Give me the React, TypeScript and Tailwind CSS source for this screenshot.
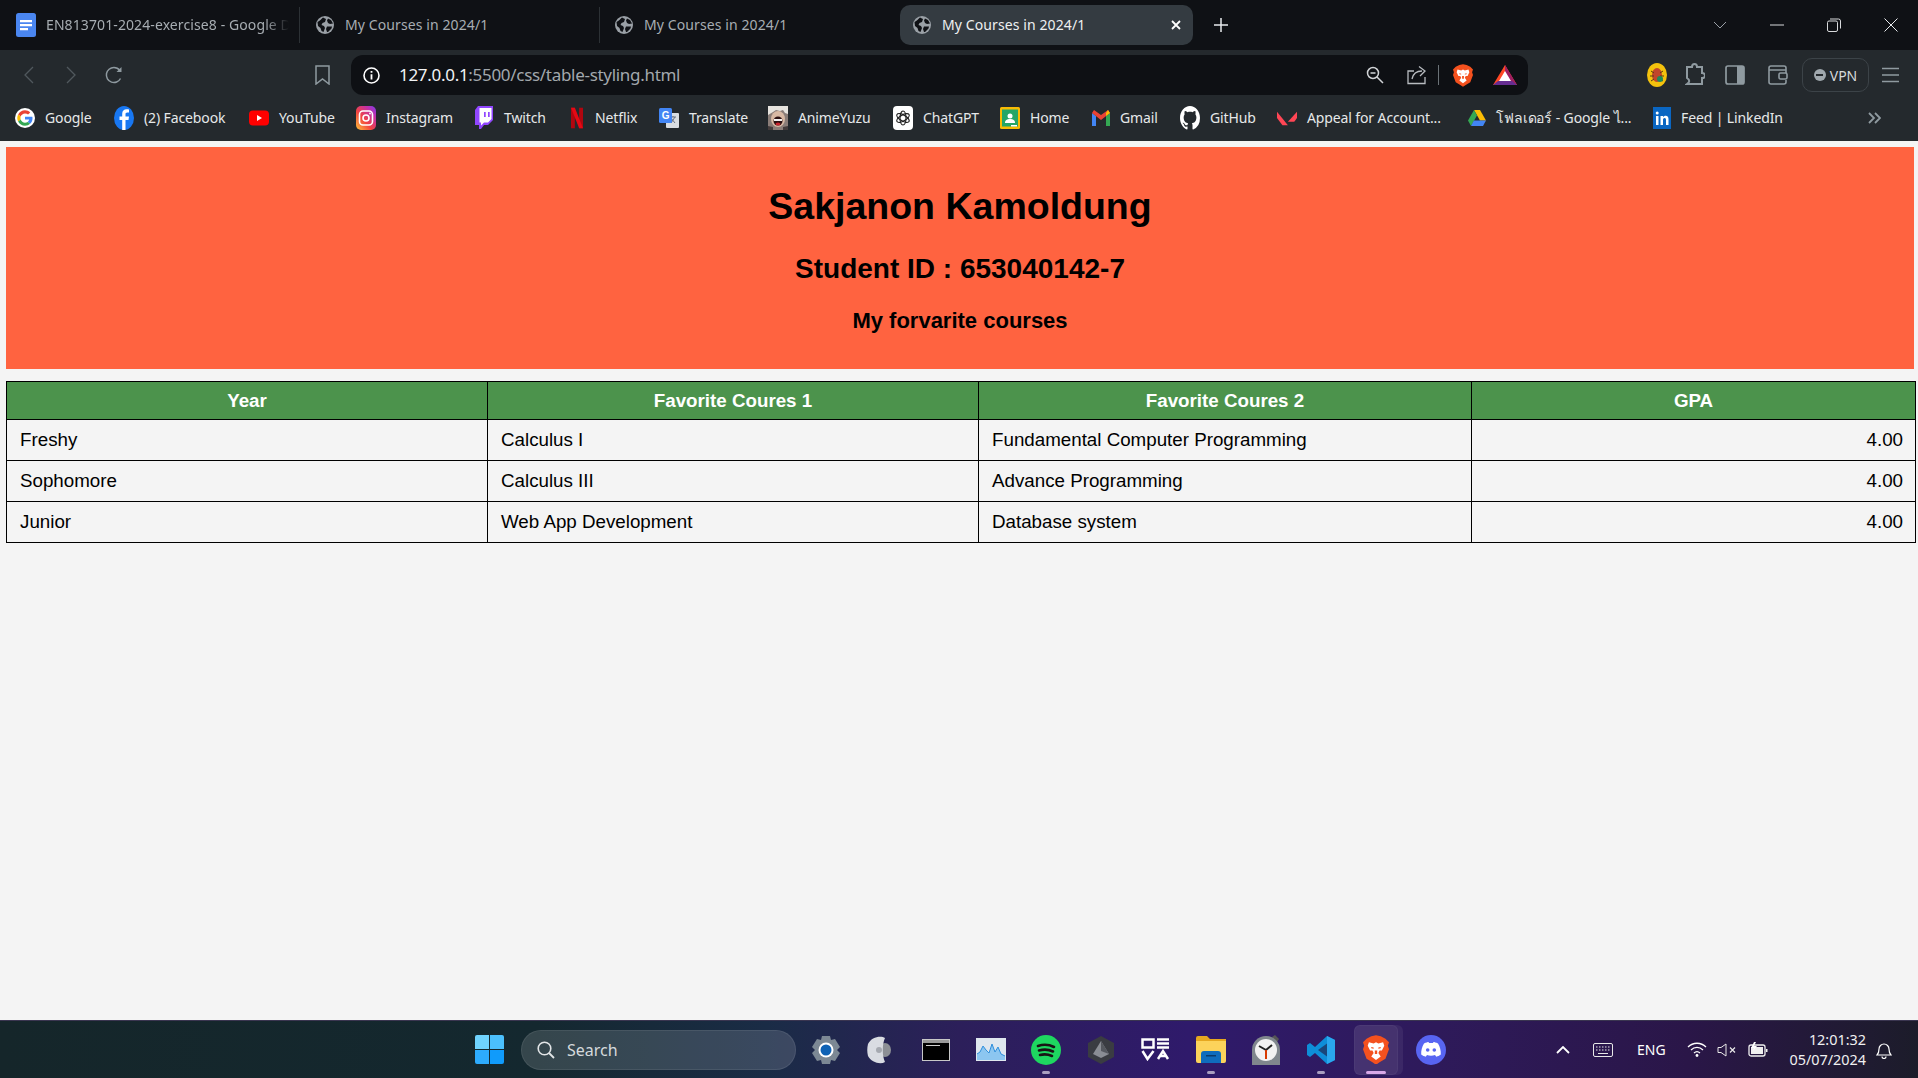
import React from "react";

const Globe = ({ c = "#9aa0a6" }: { c?: string }) => (
  <svg width="18" height="18" viewBox="0 0 18 18" className="shrink-0">
    <circle cx="9" cy="9" r="9" fill={c} />
    <path d="M1.500 6C4 5 5 3 7 1.500L10 3 9 6 6.500 7 5.500 9 8 10l1 2-1.500 4-2-1-1-3-2.500-2zM12 2.500l3 1.500 2 3.500-3 .5-2-1-1-2.500zM11 10.500l5 0-.5 2-3.500 3.500-1 0-1-3z" fill="#0f1115" />
  </svg>
);

const GoogleG = () => (
  <svg width="20" height="20" viewBox="0 0 48 48">
    <circle cx="24" cy="24" r="24" fill="#fff" />
    <path fill="#ea4335" d="M24 13c3 0 5.400 1 7.300 2.800l5.300-5.300C33.300 7.400 29 5.500 24 5.500c-7.200 0-13.500 4.100-16.500 10.200l6.200 4.800C15.100 16.100 19.200 13 24 13z" />
    <path fill="#4285f4" d="M42 24.500c0-1.300-.1-2.500-.3-3.700H24v7h10.100c-.4 2.300-1.800 4.300-3.800 5.600l6 4.600C39.800 34.800 42 30.100 42 24.500z" />
    <path fill="#fbbc05" d="M13.700 27.500c-.9-2.300-.9-4.800 0-7l-6.200-4.800c-2.700 5.200-2.700 11.400 0 16.600z" />
    <path fill="#34a853" d="M24 42.500c5 0 9.200-1.600 12.300-4.500l-6-4.600c-1.700 1.100-3.800 1.800-6.300 1.800-4.800 0-8.900-3.100-10.300-7.700l-6.200 4.800c3 6.100 9.300 10.200 16.500 10.200z" />
  </svg>
);
const Facebook = () => (
  <svg width="20" height="24" viewBox="0 0 20 24">
    <ellipse cx="10" cy="12" rx="10" ry="12" fill="#1877f2" />
    <path d="M11.500 24V14h3l.5-3.500h-3.500V8.300c0-1 .4-1.800 1.900-1.800H15V3.500c-.5-.1-1.400-.2-2.400-.2-2.700 0-4.400 1.600-4.400 4.500v2.700H5.500V14h2.700v10z" fill="#fff" />
  </svg>
);
const YouTube = () => (
  <svg width="20" height="16" viewBox="0 0 20 16">
    <rect width="20" height="15" y="0.500" rx="4" fill="#f00" />
    <path d="M8 5l5 3-5 3z" fill="#fff" />
  </svg>
);
const Instagram = () => (
  <svg width="20" height="24" viewBox="0 0 20 24">
    <defs>
      <linearGradient id="ig" x1="0" y1="1" x2="1" y2="0">
        <stop offset="0" stopColor="#fdc43a" />
        <stop offset="0.4" stopColor="#f3453f" />
        <stop offset="0.75" stopColor="#c32fa8" />
        <stop offset="1" stopColor="#7a3ff0" />
      </linearGradient>
    </defs>
    <rect width="20" height="24" rx="5" fill="url(#ig)" />
    <rect x="3.500" y="5" width="13" height="14" rx="3.500" fill="none" stroke="#fff" strokeWidth="1.600" />
    <circle cx="10" cy="12" r="3" fill="none" stroke="#fff" strokeWidth="1.600" />
    <circle cx="14" cy="7.500" r="0.900" fill="#fff" />
  </svg>
);
const Twitch = () => (
  <svg width="18" height="24" viewBox="0 0 18 24">
    <path d="M3 0h15v14l-5 5H9l-3 4H4v-4H0V4z" fill="#9146ff" />
    <path d="M4.500 2h12v11l-3.500 3.500H9l-3 3v-3H4.500z" fill="#fff" />
    <path d="M9 6h1.700v5H9zM13 6h1.700v5H13z" fill="#9146ff" />
  </svg>
);
const Netflix = () => (
  <svg width="12" height="24" viewBox="0 0 14 24">
    <path d="M0 0h4.500v24L0 24z" fill="#b1060f" />
    <path d="M9.500 0H14v24h-4.500z" fill="#b1060f" />
    <path d="M0 0h4.500L14 24H9.500z" fill="#e50914" />
  </svg>
);
const Translate = () => (
  <svg width="20" height="20" viewBox="0 0 20 20">
    <rect x="7" y="5" width="13" height="15" rx="1" fill="#d9dde1" />
    <path d="M11 9h6M14 8v1M12 15l4-6M12 10l4 5" stroke="#6b7280" strokeWidth="1" fill="none" />
    <rect x="0" y="0" width="13" height="15" rx="1.500" fill="#4285f4" />
    <text x="6.500" y="11" fontSize="10" fontWeight="700" fill="#fff" textAnchor="middle" fontFamily="Liberation Sans">G</text>
  </svg>
);
const Anime = () => (
  <svg width="20" height="24" viewBox="0 0 20 24">
    <rect width="20" height="24" fill="#8a7d78" />
    <path d="M0 0h20v8l-3-1-2-3-3 1-4-1-3 2-5 3z" fill="#e7e4df" />
    <ellipse cx="10" cy="13" rx="7" ry="8" fill="#d8b9a4" />
    <ellipse cx="10" cy="15" rx="4.500" ry="4.500" fill="#2a0f10" />
    <path d="M6 13h8v2H6z" fill="#f4f4f4" />
    <ellipse cx="10" cy="18" rx="2.500" ry="1.500" fill="#c7242f" />
    <path d="M0 20l5 1v3H0zM20 20l-5 1v3h5z" fill="#443c3c" />
  </svg>
);
const ChatGPT = () => (
  <svg width="20" height="24" viewBox="0 0 20 24">
    <rect width="20" height="24" rx="4" fill="#fff" />
    <g fill="none" stroke="#222" strokeWidth="1.200">
      <ellipse cx="10" cy="12" rx="3" ry="7" />
      <ellipse cx="10" cy="12" rx="3" ry="7" transform="rotate(60 10 12)" />
      <ellipse cx="10" cy="12" rx="3" ry="7" transform="rotate(120 10 12)" />
    </g>
  </svg>
);
const Classroom = () => (
  <svg width="20" height="22" viewBox="0 0 20 22">
    <rect width="20" height="22" rx="1.500" fill="#f9bb04" />
    <rect x="2" y="2.500" width="16" height="17" fill="#25a667" />
    <circle cx="10" cy="9" r="2.500" fill="#fff" />
    <path d="M5 16c0-3 2-4 5-4s5 1 5 4z" fill="#fff" />
    <rect x="11" y="18" width="6" height="1.500" fill="#fff" />
  </svg>
);
const Gmail = () => (
  <svg width="18" height="16" viewBox="0 0 18 16">
    <path d="M0 3v13h4V6z" fill="#4285f4" />
    <path d="M14 6v10h4V3z" fill="#34a853" />
    <path d="M0 3l9 7 9-7-2-3-7 5-7-5-2 3z" fill="#ea4335" />
    <path d="M14 3l2-3 2 3-4 3z" fill="#fbbc05" />
  </svg>
);
const Github = () => (
  <svg width="20" height="24" viewBox="0 0 16 16" preserveAspectRatio="none">
    <path fill="#fff" d="M8 0C3.580 0 0 3.580 0 8c0 3.540 2.290 6.530 5.470 7.590.4.070.55-.17.55-.38 0-.19-.01-.82-.01-1.490-2.010.37-2.530-.49-2.690-.94-.09-.23-.48-.94-.82-1.130-.28-.15-.68-.52-.01-.53.630-.01 1.080.58 1.230.82.720 1.210 1.870.87 2.330.66.070-.52.280-.87.510-1.070-1.780-.2-3.640-.89-3.640-3.950 0-.87.310-1.590.820-2.150-.08-.2-.36-1.020.08-2.120 0 0 .67-.21 2.200.82.640-.18 1.320-.27 2-.27s1.360.09 2 .27c1.530-1.040 2.200-.82 2.200-.82.440 1.100.16 1.920.08 2.120.51.56.82 1.270.82 2.150 0 3.070-1.870 3.750-3.650 3.950.29.25.54.73.54 1.480 0 1.070-.01 1.930-.01 2.200 0 .21.150.46.55.38A8.010 8.010 0 0016 8c0-4.420-3.580-8-8-8z" />
  </svg>
);
const Valorant = () => (
  <svg width="20" height="18" viewBox="0 0 22 18">
    <path d="M0 2l12 15H6L0 9z" fill="#ff4655" />
    <path d="M22 2v7l-3 4h-7z" fill="#ff4655" />
  </svg>
);
const Drive = () => (
  <svg width="18" height="18" viewBox="0 0 18 18">
    <path d="M6 1h6l6 10.500h-6z" fill="#fbbc05" />
    <path d="M6 1l-6 10.500 3 5.500 6-10.500z" fill="#34a853" />
    <path d="M5.800 11.500H18L15 17H3z" fill="#4285f4" />
  </svg>
);
const LinkedIn = () => (
  <svg width="18" height="22" viewBox="0 0 18 22">
    <rect width="18" height="22" fill="#0a66c2" />
    <rect x="3" y="9" width="2.500" height="9" fill="#fff" />
    <circle cx="4.200" cy="6" r="1.500" fill="#fff" />
    <path d="M7.500 9H10v1.300c.6-1 1.500-1.500 2.700-1.500 2 0 2.800 1.400 2.800 3.500V18H13v-5c0-1.300-.4-2-1.400-2s-1.600.8-1.600 2v5H7.500z" fill="#fff" />
  </svg>
);

const Brave = ({ s = 22 }: { s?: number }) => (
  <svg width={s} height={s * 1.15} viewBox="0 0 22 25">
    <path d="M3 3l4-2 4-1 4 1 4 2 3 3-1 3 1 3-3 8-5 3-3 2-3-2-5-3-3-8 1-3-1-3z" fill="#f4511e" />
    <path d="M5 6l4 1 2-1 2 1 4-1 1 3-2 4-2 0-1 2 2 3-4 3-4-3 2-3-1-2-2 0-2-4z" fill="#fff" />
    <path d="M7 10l2 .5v1l-2-.5zM15 10l-2 .5v1l2-.5zM10 13h2v3h-2z" fill="#f4511e" />
  </svg>
);
const Bat = () => (
  <svg width="24" height="20" viewBox="0 0 24 20">
    <path d="M12 0l12 20H0z" fill="#ff4724" />
    <path d="M12 0l12 20H17L12 10z" fill="#9e1f63" />
    <path d="M0 20h24l-5-4H5z" fill="#662d91" />
    <path d="M12 6l6 10H6z" fill="#fff" />
  </svg>
);

const stroke = "#8f9aa0";

const bookmarks = [
  { w: "w-[99px]", icon: <GoogleG />, box: "w-[20px]", t: "Google" },
  { w: "w-[135px]", icon: <Facebook />, box: "w-[20px]", t: "(2) Facebook" },
  { w: "w-[107px]", icon: <YouTube />, box: "w-[20px]", t: "YouTube" },
  { w: "w-[118px]", icon: <Instagram />, box: "w-[20px]", t: "Instagram" },
  { w: "w-[94px]", icon: <Twitch />, box: "w-[20px]", t: "Twitch" },
  { w: "w-[91px]", icon: <Netflix />, box: "w-[17px]", t: "Netflix" },
  { w: "w-[109px]", icon: <Translate />, box: "w-[20px]", t: "Translate" },
  { w: "w-[125px]", icon: <Anime />, box: "w-[20px]", t: "AnimeYuzu" },
  { w: "w-[107px]", icon: <ChatGPT />, box: "w-[20px]", t: "ChatGPT" },
  { w: "w-[92px]", icon: <Classroom />, box: "w-[20px]", t: "Home" },
  { w: "w-[88px]", icon: <Gmail />, box: "w-[18px]", t: "Gmail" },
  { w: "w-[97px]", icon: <Github />, box: "w-[20px]", t: "GitHub" },
  { w: "w-[191px]", icon: <Valorant />, box: "w-[20px]", t: "Appeal for Account..." },
  { w: "w-[185px]", icon: <Drive />, box: "w-[18px]", t: "โฟลเดอร์ - Google ไ..." },
  { w: "w-[193px]", icon: <LinkedIn />, box: "w-[18px]", t: "Feed | LinkedIn" },
];

const rows = [
  ["Freshy", "Calculus I", "Fundamental Computer Programming", "4.00"],
  ["Sophomore", "Calculus III", "Advance Programming", "4.00"],
  ["Junior", "Web App Development", "Database system", "4.00"],
];

const Slot = ({ children, dot, active }: { children: React.ReactNode; dot?: boolean; active?: boolean }) => (
  <div className="relative flex items-center justify-center w-[55px] h-[50px]">
    {active && (
      <span className="w-[49px] h-[50px] rounded-md bg-[#ffffff10] absolute left-[6px] top-0" />
    )}
    {active && (
      <span className="w-[44px] h-[50px] rounded-md bg-[#ffffff0d] border border-[#ffffff0a] absolute left-[6px] top-0" />
    )}
    <span className="relative flex">{children}</span>
    {dot && <span className="absolute bottom-[1px] h-[3px] w-[8px] rounded-full bg-[#a99fc0]" />}
    {active && <span className="absolute bottom-[1px] h-[3px] w-[20px] rounded-full bg-[#d8a8e8]" />}
  </div>
);

export default function App() {
  return (
    <div className="w-[1918px] h-[1078px] flex flex-col overflow-hidden bg-[#f4f4f4] font-['Liberation_Sans',sans-serif]">
      {/* Tab strip */}
      <div className="h-[50px] shrink-0 bg-[#0f1115] flex items-center text-[14px] leading-[18px] pb-[1px] font-['Noto_Sans',sans-serif] tracking-[0.1px]">
        <div className="w-[300px] h-[36px] flex items-center pl-[16px] border-r border-[#2c3135]">
          <svg width="20" height="24" viewBox="0 0 20 24" className="shrink-0">
            <rect width="20" height="24" rx="2.500" fill="#4a86f0" />
            <path d="M4 7h12v2.200H4zM4 11h12v2.200H4zM4 15h8v2.200H4z" fill="#fff" />
          </svg>
          <span className="ml-[10px] w-[243px] overflow-hidden whitespace-nowrap text-[#a7adb2] [mask-image:linear-gradient(to_right,black_90%,transparent)]">
            EN813701-2024-exercise8 - Google Docs
          </span>
        </div>
        <div className="w-[300px] h-[36px] flex items-center pl-[16px] border-r border-[#2c3135] text-[#a7adb2]">
          <Globe />
          <span className="ml-[11px]">My Courses in 2024/1</span>
        </div>
        <div className="w-[300px] h-[36px] flex items-center pl-[15px] text-[#a7adb2]">
          <Globe />
          <span className="ml-[11px]">My Courses in 2024/1</span>
        </div>
        <div className="w-[293px] h-[40px] rounded-[10px] bg-[#343b41] flex items-center pl-[13px] pr-[12px] text-[#eef0f1]">
          <Globe />
          <span className="ml-[11px] flex-1">My Courses in 2024/1</span>
          <svg width="10" height="10" viewBox="0 0 10 10">
            <path d="M1 1l8 8M9 1L1 9" stroke="#fff" strokeWidth="1.800" />
          </svg>
        </div>
        <svg width="14" height="14" viewBox="0 0 14 14" className="ml-[21px]">
          <path d="M7 0v14M0 7h14" stroke="#e8eaed" strokeWidth="1.500" />
        </svg>
        <div className="ml-auto flex items-center mr-[-1px]">
          <div className="w-[57px] flex justify-center">
            <svg width="14" height="8" viewBox="0 0 14 8"><path d="M1 1l6 6 6-6" stroke="#9aa0a6" fill="none" /></svg>
          </div>
          <div className="w-[57px] flex justify-center">
            <svg width="14" height="2" viewBox="0 0 14 2"><path d="M0 1h14" stroke="#d8dadc" /></svg>
          </div>
          <div className="w-[57px] flex justify-center">
            <svg width="14" height="14" viewBox="0 0 14 14" fill="none" stroke="#d8dadc">
              <rect x="0.500" y="3" width="10" height="10.500" rx="1.500" />
              <path d="M3 1h8.500a2 2 0 012 2v7.500" />
            </svg>
          </div>
          <div className="w-[57px] flex justify-center">
            <svg width="14" height="14" viewBox="0 0 14 14"><path d="M.5.500l13 13M13.500.500l-13 13" stroke="#e8eaed" /></svg>
          </div>
        </div>
      </div>

      {/* Toolbar */}
      <div className="h-[45px] shrink-0 bg-[#24292d] flex items-center pt-[5px] pl-[23px]">
        <svg width="11" height="18" viewBox="0 0 11 18" className="shrink-0"><path d="M10 1L2 9l8 8" stroke="#50585d" strokeWidth="1.300" fill="none" /></svg>
        <svg width="11" height="18" viewBox="0 0 11 18" className="shrink-0 ml-[32px]"><path d="M1 1l8 8-8 8" stroke="#50585d" strokeWidth="1.300" fill="none" /></svg>
        <svg width="20" height="20" viewBox="0 0 20 20" className="shrink-0 ml-[27px]">
          <path d="M16.500 13.500A7.500 7.500 0 1110 2.500c2.500 0 4.500 1.200 6 3" stroke={stroke} strokeWidth="1.500" fill="none" />
          <path d="M17.500 2v5h-5z" fill={stroke} />
        </svg>
        <svg width="15" height="20" viewBox="0 0 15 20" className="shrink-0 ml-[191px]">
          <path d="M1 1h13v18l-6.500-5L1 19z" stroke={stroke} strokeWidth="1.500" fill="none" />
        </svg>
        <div className="ml-[21px] w-[1177px] h-[40px] shrink-0 rounded-[12px] bg-[#0e1014] flex items-center pl-[12px] pr-[11px]">
          <svg width="17" height="17" viewBox="0 0 17 17" className="shrink-0">
            <circle cx="8.500" cy="8.500" r="7.500" stroke="#fff" strokeWidth="1.600" fill="none" />
            <path d="M7.600 7.200h1.800v5.300H7.600zM7.600 4h1.800v1.800H7.600z" fill="#fff" />
          </svg>
          <span className="ml-[19px] text-[17px] tracking-[-0.3px] text-[#f2f3f4] font-['Noto_Sans',sans-serif]">
            127.0.0.1<span className="text-[#a2a8ad]">:5500/css/table-styling.html</span>
          </span>
          <div className="ml-auto flex items-center">
            <svg width="18" height="18" viewBox="0 0 18 18">
              <circle cx="7" cy="7" r="5.500" stroke="#d0d3d6" strokeWidth="1.500" fill="none" />
              <path d="M4.500 7h5M11 11l6 6" stroke="#d0d3d6" strokeWidth="1.500" />
            </svg>
            <svg width="20" height="20" viewBox="0 0 20 20" className="ml-[23px]">
              <path d="M18 12v6.500H1V6h6M5 14c1-5 5-8 10-8M12 1.500L18 6l-5 5" stroke="#b8bcc0" strokeWidth="1.300" fill="none" />
            </svg>
            <span className="ml-[11px] w-px h-[20px] bg-[#6b7277]" />
            <span className="ml-[14px] flex"><Brave s={20} /></span>
            <span className="ml-[20px] flex"><Bat /></span>
          </div>
        </div>
        <svg width="20" height="24" viewBox="0 0 20 24" className="ml-[119px] shrink-0">
          <ellipse cx="10" cy="12" rx="10" ry="12" fill="#f4c20d" />
          <ellipse cx="10" cy="12" rx="5" ry="7" fill="#c1452b" />
          <path d="M4 8l3 2M16 8l-3 2M3 13h4M17 13h-4M4 18l3-2M16 18l-3-2" stroke="#5a3a10" strokeWidth="1" />
          <circle cx="13" cy="16" r="3" fill="#1f8a5b" />
        </svg>
        <svg width="20" height="24" viewBox="0 0 20 24" className="ml-[18px] shrink-0">
          <path d="M2 4h5c0-4 5-4 5 0h5v6c4 0 4 5 0 5v6H2c3-2 3-4 0-6z" stroke={stroke} strokeWidth="2" fill="none" />
        </svg>
        <svg width="20" height="20" viewBox="0 0 20 20" className="ml-[20px] shrink-0">
          <rect x="1" y="1" width="18" height="18" rx="2" stroke={stroke} strokeWidth="1.700" fill="none" />
          <rect x="12" y="1" width="7" height="18" fill={stroke} />
        </svg>
        <svg width="20" height="20" viewBox="0 0 20 20" className="ml-[23px] shrink-0">
          <path d="M18 5V3a2 2 0 00-2-2H3a2 2 0 00-2 2v14a2 2 0 002 2h13a2 2 0 002-2v-2M1 5h17v3" stroke={stroke} strokeWidth="1.600" fill="none" />
          <rect x="11" y="8" width="8" height="6" rx="1.500" stroke={stroke} strokeWidth="1.600" fill="none" />
        </svg>
        <div className="ml-[14px] w-[67px] h-[34px] shrink-0 rounded-[10px] border border-[#3c4348] flex items-center justify-center font-['Noto_Sans',sans-serif] text-[14px] text-[#d6d9db]">
          <span className="w-[12px] h-[12px] rounded-full bg-[#a0a8ae] flex items-center justify-center mr-[4px]">
            <span className="w-[7px] h-[2px] bg-[#24292d]" />
          </span>
          VPN
        </div>
        <svg width="17" height="16" viewBox="0 0 17 16" className="ml-[13px] shrink-0">
          <path d="M0 1.500h17M0 8h17M0 14.500h17" stroke={stroke} strokeWidth="1.500" />
        </svg>
      </div>

      {/* Bookmarks */}
      <div className="h-[46px] shrink-0 bg-[#24292d] flex items-center pb-[1px] pl-[15px] text-[14px] leading-[18px] tracking-[-0.12px] text-[#e6e8e9] font-['Noto_Sans','Noto_Sans_CJK_SC',sans-serif]">
        {bookmarks.map((b) => (
          <div key={b.t} className={`${b.w} shrink-0 flex items-center`}>
            <span className={`${b.box} flex justify-center shrink-0`}>{b.icon}</span>
            <span className="ml-[10px] whitespace-nowrap">{b.t}</span>
          </div>
        ))}
        <svg width="13" height="12" viewBox="0 0 13 12" className="ml-[22px] shrink-0">
          <path d="M1 1l5 5-5 5M7 1l5 5-5 5" stroke={stroke} strokeWidth="1.800" fill="none" />
        </svg>
      </div>

      {/* Page */}
      <main className="flex-1 min-h-0 bg-[#f4f4f4] pt-[6px] pl-[6px] text-black">
        <header className="w-[1908px] h-[222px] bg-[#ff6340] flex flex-col items-center pt-[37px]">
          <h1 className="text-[37.5px] leading-[44px] font-bold">Sakjanon Kamoldung</h1>
          <h2 className="text-[28px] leading-[32px] font-bold mt-[25px]">Student ID : 653040142-7</h2>
          <h3 className="text-[22px] leading-[26px] font-bold mt-[23px]">My forvarite courses</h3>
        </header>
        <table className="mt-[12px] w-[1909px] table-fixed border-collapse text-[18.75px]">
          <colgroup>
            <col className="w-[481px]" />
            <col className="w-[491px]" />
            <col className="w-[493px]" />
            <col className="w-[444px]" />
          </colgroup>
          <thead>
            <tr className="h-[38px] bg-[#4c934c] text-white">
              <th className="border border-black font-bold p-0 pt-[1px]">Year</th>
              <th className="border border-black font-bold p-0 pt-[1px]">Favorite Coures 1</th>
              <th className="border border-black font-bold p-0 pt-[1px]">Favorite Coures 2</th>
              <th className="border border-black font-bold p-0 pt-[1px]">GPA</th>
            </tr>
          </thead>
          <tbody>
            {rows.map((r) => (
              <tr key={r[0]} className="h-[41px]">
                <td className="border border-black pl-[13px] pr-[12px] py-0">{r[0]}</td>
                <td className="border border-black pl-[13px] pr-[12px] py-0">{r[1]}</td>
                <td className="border border-black pl-[13px] pr-[12px] py-0">{r[2]}</td>
                <td className="border border-black pl-[13px] pr-[12px] py-0 text-right">{r[3]}</td>
              </tr>
            ))}
          </tbody>
        </table>
      </main>

      {/* Taskbar */}
      <footer className="h-[58px] shrink-0 flex items-center border-t border-[#3a3550] bg-[linear-gradient(90deg,#15262a_0%,#14282f_28%,#1a2c46_40%,#2c1f5a_50%,#2f1a6b_62%,#2e1a5a_75%,#2a1648_88%,#1c1c2a_100%)] font-['Noto_Sans',sans-serif] text-white">
        <div className="ml-[475px] w-[29px] h-[29px] grid grid-cols-2 gap-[1px] shrink-0">
          <span className="rounded-tl-[2px] bg-[#6fd3fe]" />
          <span className="rounded-tr-[2px] bg-[#4bc0fd]" />
          <span className="rounded-bl-[2px] bg-[#2dabfd]" />
          <span className="rounded-br-[2px] bg-[#109bfb]" />
        </div>
        <div className="ml-[17px] w-[275px] h-[40px] shrink-0 rounded-full bg-[#ffffff24] border border-[#ffffff14] flex items-center pl-[15px] text-[16px] text-[#d5dadc]">
          <svg width="18" height="18" viewBox="0 0 18 18">
            <circle cx="7.500" cy="7.500" r="6.300" stroke="#e2e5e7" strokeWidth="1.600" fill="none" />
            <path d="M12 12l5 5" stroke="#e2e5e7" strokeWidth="1.800" />
          </svg>
          <span className="ml-[12px]">Search</span>
        </div>
        <div className="ml-[2px] flex items-center">
          <Slot>
            <svg width="30" height="30" viewBox="0 0 30 30">
              <path d="M11 1h8l1 4 4-1 5 8-3 3 3 3-5 8-4-1-1 4h-8l-1-4-4 1-5-8 3-3-3-3 5-8 4 1z" fill="#7c8894" />
              <circle cx="15" cy="15" r="7.500" fill="#fff" />
              <circle cx="15" cy="15" r="5.500" fill="#0f62b5" />
            </svg>
          </Slot>
          <Slot>
            <svg width="28" height="28" viewBox="0 0 28 28" className="-ml-[3px]">
              <ellipse cx="20" cy="14" rx="6" ry="7" fill="#8d9096" />
              <path d="M3 8c3-7 13-9 17-6-3 6-3 18 0 24-5 3-14 0-17-6-1-4-1-8 0-12z" fill="#d9dce2" />
              <circle cx="14" cy="14" r="3" fill="#a5a9b0" />
            </svg>
          </Slot>
          <Slot>
            <div className="w-[28px] h-[22px] border border-[#c8c8c8] bg-black flex flex-col">
              <span className="h-[3px] bg-[#9a9a9a]" />
              <span className="ml-[3px] mt-[2px] w-[14px] h-[1.500px] bg-[#d0d0d0]" />
            </div>
          </Slot>
          <Slot>
            <svg width="30" height="23" viewBox="0 0 30 23">
              <rect width="30" height="23" fill="#dfe7ee" />
              <path d="M1 22V16l3-2 3-6 3 4 3 3 3-9 3 8 3-5 3 7 4 2v4z" fill="#8cc6f0" />
              <path d="M1 16l3-2 3-6 3 4 3 3 3-9 3 8 3-5 3 7 4 2" stroke="#2f8fdc" fill="none" />
            </svg>
          </Slot>
          <Slot dot>
            <svg width="30" height="30" viewBox="0 0 30 30">
              <circle cx="15" cy="15" r="15" fill="#1ed760" />
              <path d="M7 11c6-2 11-1.500 16 1M8 15.500c5-1.500 10-1 14 1M9 20c4-1 8-.8 12 1" stroke="#191414" strokeWidth="2.600" strokeLinecap="round" fill="none" />
            </svg>
          </Slot>
          <Slot>
            <svg width="26" height="28" viewBox="0 0 26 28">
              <path d="M13 0l13 7v14l-13 7L0 21V7z" fill="#3a3c42" />
              <path d="M13 5l8 13-8 4-8-4z" fill="#8a8d94" />
              <path d="M13 5l8 13-8-3z" fill="#55585f" />
            </svg>
          </Slot>
          <Slot>
            <svg width="29" height="23" viewBox="0 0 29 23" fill="none" stroke="#fff" strokeWidth="2.500">
              <path d="M1.500 1.500h11v8h-11zM16 1.500h12M16 5.500h12M16 9.500h12" />
              <path d="M1.500 13l5 8 6-8M17 21l5-8 5 8M19 18h6" />
            </svg>
          </Slot>
          <Slot dot>
            <svg width="30" height="27" viewBox="0 0 30 27">
              <path d="M0 2a2 2 0 012-2h9l3 3h16v5H0z" fill="#e6a820" />
              <path d="M0 5h30v20a2 2 0 01-2 2H2a2 2 0 01-2-2z" fill="#fcd35b" />
              <path d="M5 18a3 3 0 013-3h14a3 3 0 013 3v9H5z" fill="#0f6cbd" />
              <rect x="10" y="19" width="10" height="1.500" fill="#0b3a6b" />
            </svg>
          </Slot>
          <Slot>
            <svg width="30" height="30" viewBox="0 0 30 30">
              <path d="M21 2l3-2 4 4-2 3z" fill="#555" />
              <path d="M15 1a14 14 0 0114 14v15H1V15A14 14 0 0115 1z" fill="#80878d" />
              <circle cx="15" cy="15" r="11" fill="#f2f2f2" />
              <path d="M15 15L8 11M15 15l6-5" stroke="#222" strokeWidth="2" />
              <path d="M15 15v9" stroke="#d83b01" strokeWidth="2" />
            </svg>
          </Slot>
          <Slot dot>
            <svg width="30" height="30" viewBox="0 0 30 30">
              <path d="M21 1l8 4v20l-8 4-12-11-5 4-3-2v-10l3-2 5 4z" fill="#0e8ed8" />
              <path d="M21 1l8 4v20l-8 4z" fill="#2aa7ee" />
              <path d="M21 8.500L12 15l9 6.500z" fill="#1b3a6a" opacity="0.850" />
            </svg>
          </Slot>
          <Slot active>
            <Brave s={26} />
          </Slot>
          <Slot>
            <span className="w-[30px] h-[30px] rounded-full bg-[#5865f2] flex items-center justify-center">
              <svg width="20" height="15" viewBox="0 0 20 15">
                <path d="M3 1.500C5 .5 7 0 7.500 0l.5 1h4l.5-1c.5 0 2.500.5 4.500 1.500 2 3 3 7 2.800 11-1.500 1.200-3 1.800-4.500 2.200L14 13c-2.500 1-5.500 1-8 0l-1.300 1.700C3.200 14.300 1.700 13.700.2 12.500 0 8.500 1 4.500 3 1.500z" fill="#fff" />
                <circle cx="6.700" cy="8" r="1.800" fill="#5865f2" />
                <circle cx="13.300" cy="8" r="1.800" fill="#5865f2" />
              </svg>
            </span>
          </Slot>
        </div>
        <svg width="14" height="8" viewBox="0 0 14 8" className="ml-[98px] shrink-0">
          <path d="M1 7l6-6 6 6" stroke="#fff" strokeWidth="1.800" fill="none" />
        </svg>
        <svg width="20" height="14" viewBox="0 0 20 14" className="ml-[23px] shrink-0">
          <rect x="0.500" y="0.500" width="19" height="13" rx="1.500" stroke="#e8e8e8" fill="none" />
          <path d="M3 4h14M3 7h14" stroke="#e8e8e8" strokeDasharray="1.500 1.500" />
          <path d="M5 10.500h10" stroke="#e8e8e8" />
        </svg>
        <span className="ml-[24px] w-[30px] text-[14px] shrink-0">ENG</span>
        <svg width="20" height="15" viewBox="0 0 20 15" className="ml-[20px] shrink-0">
          <path d="M1 5c5-5 13-5 18 0M4 8c3.500-3.500 8.500-3.500 12 0M7 11c2-1.800 4-1.800 6 0" stroke="#fff" strokeWidth="1.300" fill="none" />
          <circle cx="10" cy="13.500" r="1.400" fill="#fff" />
        </svg>
        <svg width="20" height="14" viewBox="0 0 20 14" className="ml-[10px] shrink-0">
          <path d="M1 4.500h3L9 1v12L4 9.500H1z" stroke="#e8e8e8" fill="none" />
          <path d="M13 4.500l5 5M18 4.500l-5 5" stroke="#e8e8e8" strokeWidth="1.200" />
        </svg>
        <svg width="20" height="16" viewBox="0 0 20 16" className="ml-[11px] shrink-0">
          <rect x="1" y="3" width="16" height="11" rx="2" stroke="#f0f0f0" strokeWidth="1.300" fill="none" />
          <rect x="3" y="5" width="12" height="7" fill="#f0f0f0" />
          <rect x="18" y="7" width="1.500" height="3" fill="#f0f0f0" />
          <path d="M6 0L3 6h3l-1 3 4-5H6l2-4z" fill="#fff" />
        </svg>
        <div className="ml-[6px] w-[92px] shrink-0 text-right text-[14.4px] leading-[20px] text-[#f0f0f0]">
          <div>12:01:32</div>
          <div>05/07/2024</div>
        </div>
        <svg width="16" height="18" viewBox="0 0 16 18" className="ml-[10px] shrink-0">
          <path d="M1 14c1.500-1.500 2-3 2-6a5 5 0 0110 0c0 3 .5 4.500 2 6zM6 15.500a2 2 0 004 0" stroke="#fff" strokeWidth="1.200" fill="none" />
        </svg>
      </footer>
    </div>
  );
}
